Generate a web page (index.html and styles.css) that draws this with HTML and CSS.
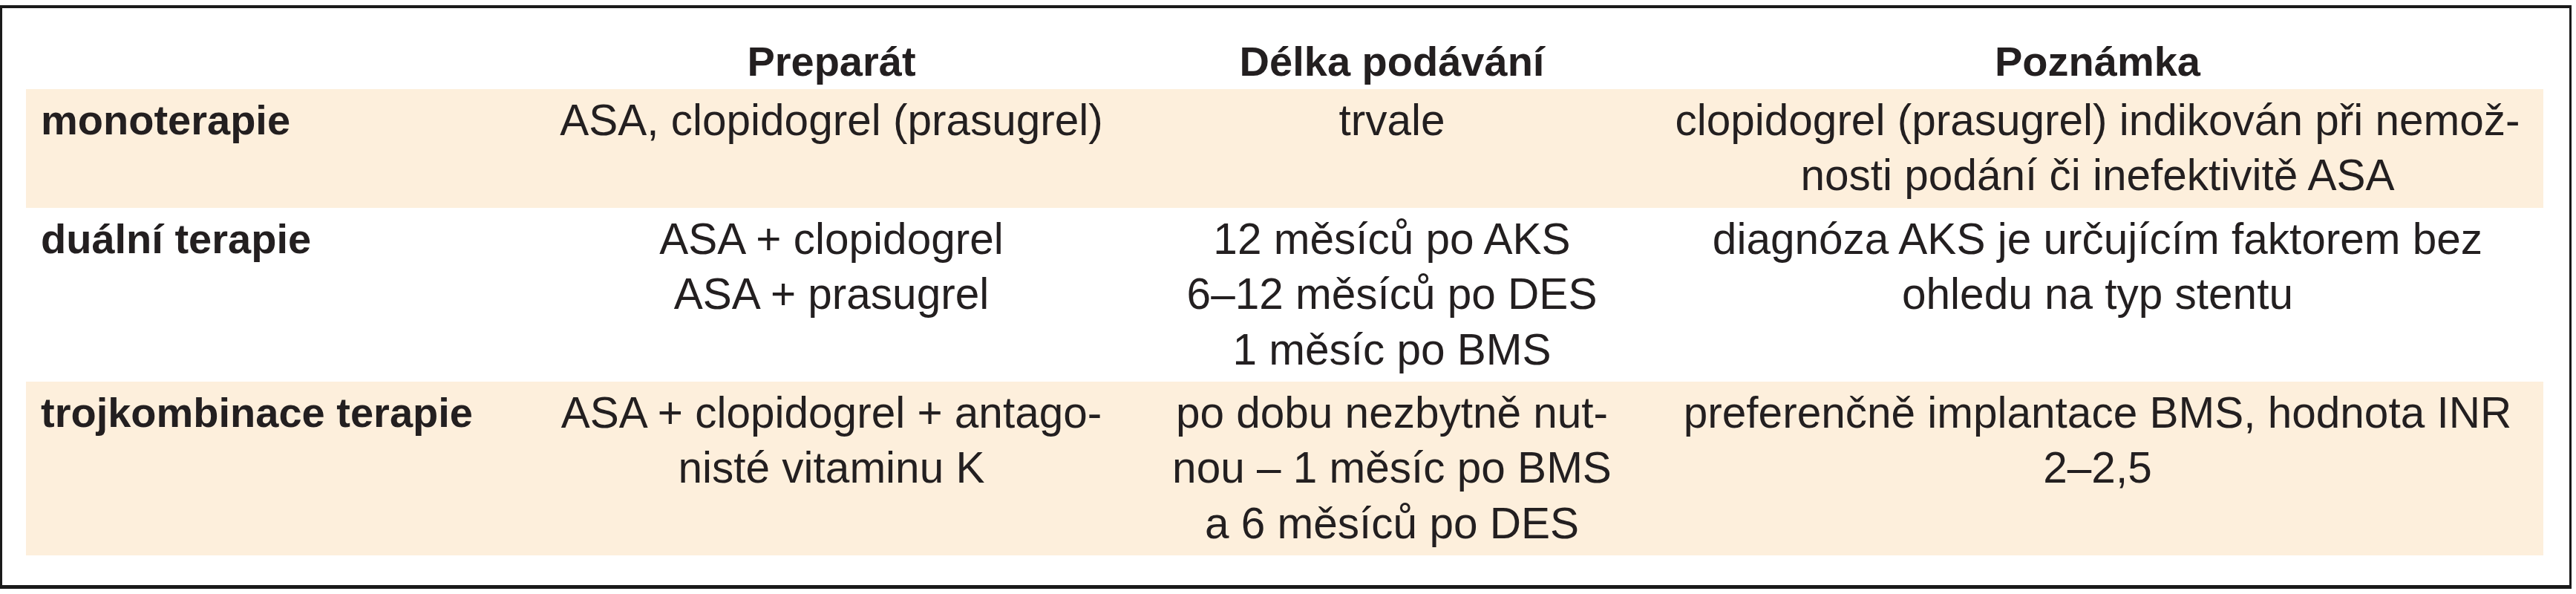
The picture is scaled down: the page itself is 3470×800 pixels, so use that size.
FILE: index.html
```html
<!DOCTYPE html>
<html lang="cs">
<head>
<meta charset="utf-8">
<title>Protidestičková terapie</title>
<link rel="stylesheet" href="styles.css">
</head>
<body>
<div class="frame">
  <table class="tbl">
    <colgroup>
      <col class="c1">
      <col class="c2">
      <col class="c3">
      <col class="c4">
    </colgroup>
    <thead>
      <tr class="head">
        <th></th>
        <th>Preparát</th>
        <th>Délka podávání</th>
        <th>Poznámka</th>
      </tr>
    </thead>
    <tbody>
      <tr class="row band">
        <th class="label">monoterapie</th>
        <td>ASA, clopidogrel (prasugrel)</td>
        <td>trvale</td>
        <td>clopidogrel (prasugrel) indikován při nemož-<br>nosti podání či inefektivitě ASA</td>
      </tr>
      <tr class="row">
        <th class="label">duální terapie</th>
        <td>ASA + clopidogrel<br>ASA + prasugrel</td>
        <td>12 měsíců po AKS<br>6–12 měsíců po DES<br>1 měsíc po BMS</td>
        <td>diagnóza AKS je určujícím faktorem bez<br>ohledu na typ stentu</td>
      </tr>
      <tr class="row band">
        <th class="label">trojkombinace terapie</th>
        <td>ASA + clopidogrel + antago-<br>nisté vitaminu K</td>
        <td>po dobu nezbytně nut-<br>nou – 1 měsíc po BMS<br>a 6 měsíců po DES</td>
        <td>preferenčně implantace BMS, hodnota INR<br>2–2,5</td>
      </tr>
    </tbody>
  </table>
</div>
</body>
</html>
```

FILE: styles.css
```css
html, body {
  margin: 0;
  padding: 0;
  background: #ffffff;
}

body {
  font-family: "Liberation Sans", Arial, sans-serif;
  color: #231f20;
}

.frame {
  box-sizing: border-box;
  width: 3464px;
  margin-top: 7px;
  border-top: 4px solid #1a1a1a;
  border-bottom: 5px solid #1a1a1a;
  border-left: 3px solid #1a1a1a;
  border-right: 3px solid #1a1a1a;
  padding: 35px 35px 40px 32px;
}

.tbl {
  table-layout: fixed;
  border-collapse: collapse;
  border-spacing: 0;
  width: 3391px;
}

.c1 { width: 680px; }
.c2 { width: 810px; }
.c3 { width: 700px; }
.c4 { width: 1201px; }

.tbl th,
.tbl td {
  padding: 0 20px;
  vertical-align: top;
  white-space: nowrap;
  line-height: 74.2px;
}

.head th {
  font-size: 56px;
  font-weight: bold;
  text-align: center;
  padding-top: 0;
  padding-bottom: 0;
}

.row th,
.row td {
  padding-top: 5px;
  padding-bottom: 6.5px;
}

.row td {
  font-size: 58.5px;
  font-weight: normal;
  text-align: center;
}

.row .label {
  font-size: 56px;
  font-weight: bold;
  text-align: left;
}

.band {
  background: #fdefdc;
}
```
